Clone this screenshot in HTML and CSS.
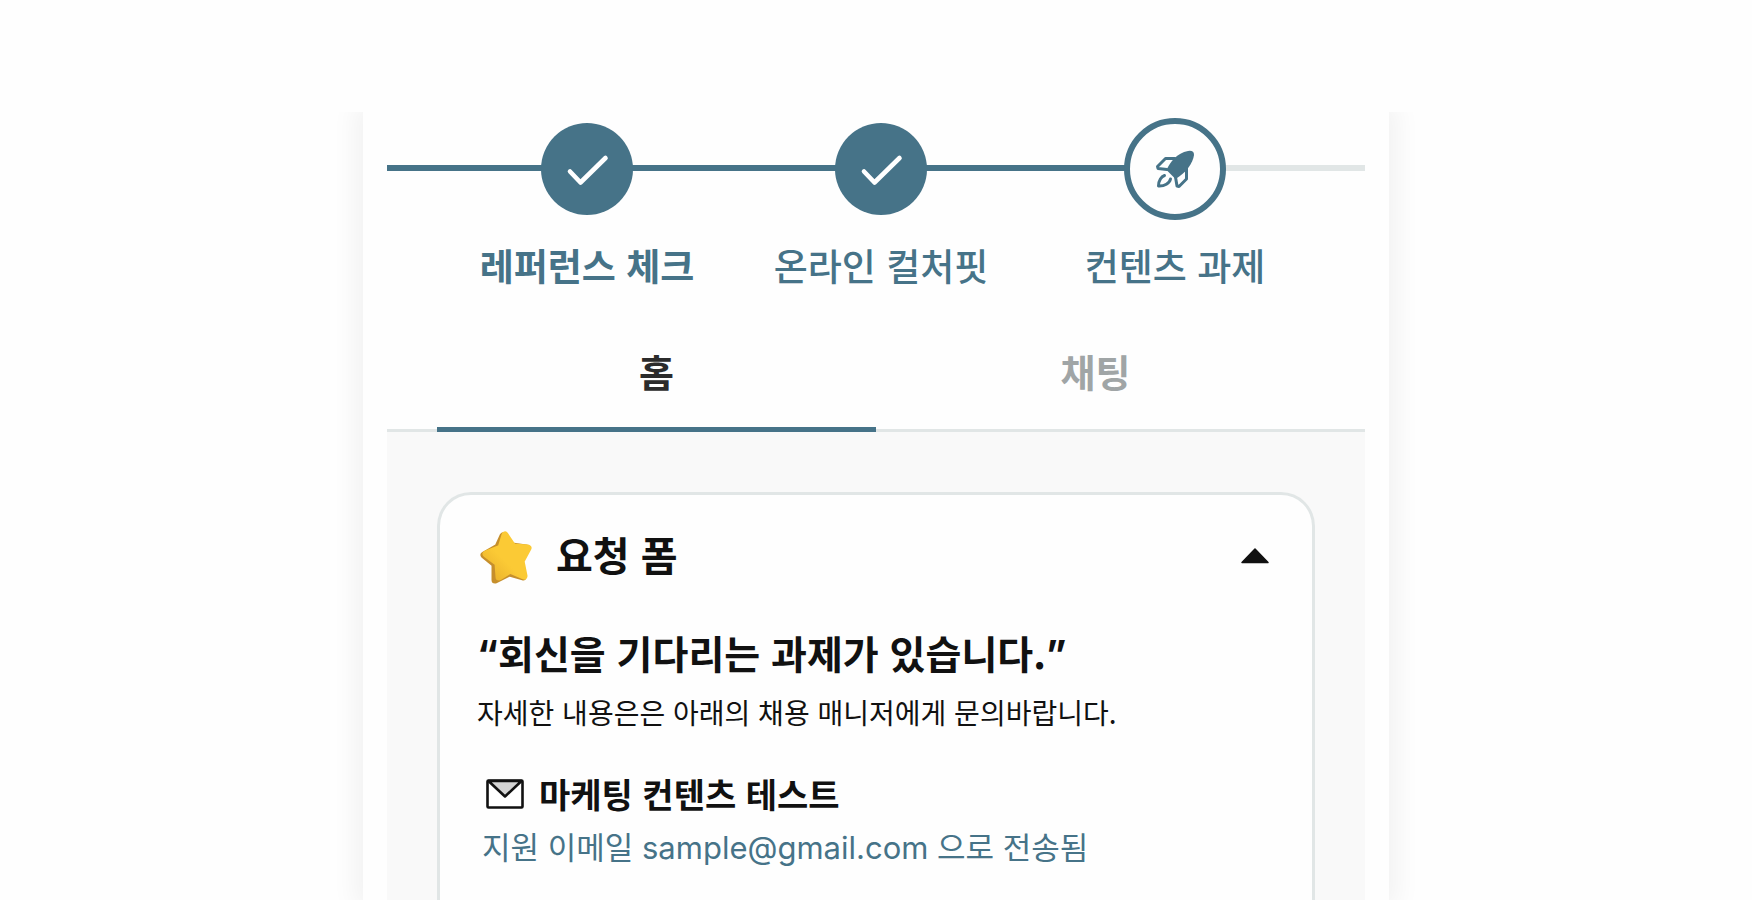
FILE: index.html
```
<!DOCTYPE html>
<html lang="ko">
<head>
    <meta charset="UTF-8">
    <meta name="viewport" content="width=device-width, initial-scale=1.0">
    <title>컨텐츠 과제</title>
    <link rel="stylesheet" href="styles.css">
</head>
<body>

<main class="phone">
    <ol class="steps">
        <li class="step">
            <div class="marker-box">
                <span class="marker">
                    <svg width="44" height="34" viewBox="0 0 44 34" fill="none" stroke="#fff" stroke-width="4.600" stroke-linecap="round" stroke-linejoin="round"><path d="M5 19.500L15.500 30.500L40.500 6"/></svg>
                </span>
            </div>
            <span class="step-label first">레퍼런스 체크</span>
        </li>
        <li class="step">
            <div class="marker-box">
                <span class="marker">
                    <svg width="44" height="34" viewBox="0 0 44 34" fill="none" stroke="#fff" stroke-width="4.600" stroke-linecap="round" stroke-linejoin="round"><path d="M5 19.500L15.500 30.500L40.500 6"/></svg>
                </span>
            </div>
            <span class="step-label">온라인 컬처핏</span>
        </li>
        <li class="step">
            <div class="marker-box">
                <span class="marker current">
                    <svg width="40" height="40" viewBox="0 0 40 40" fill="none" stroke="#467388" stroke-width="3" stroke-linejoin="round" stroke-linecap="round">
                        <path d="M11.500 21C15 13 22 4 33 2q6-1 6 4C38 14 31 24 20.500 30z" fill="#467388" stroke="none"/>
                        <path d="M20 9.500H10.500L2.500 17.500l.5 2L12 20.500"/>
                        <path d="M31.500 19v11L24 37.500l-2-.5L20.500 28"/>
                        <path d="M9.500 26.500c-3 1-6 5-6 10.500 6 .3 11-2.500 12-7"/>
                    </svg>
                </span>
            </div>
            <span class="step-label">컨텐츠 과제</span>
        </li>
    </ol>

    <div class="tabs" role="tablist">
        <button class="tab active" role="tab" aria-selected="true">홈</button>
        <button class="tab" role="tab" aria-selected="false">채팅</button>
    </div>

    <section class="content">
        <div class="card">
            <div class="card-header">
                <svg class="star" width="52" height="54" viewBox="0 0 52 54" stroke-linejoin="round">
                    <defs>
                        <linearGradient id="starFace" x1="0" y1="1" x2="0.7" y2="0.3">
                            <stop offset="0" stop-color="#e9b02c"/>
                            <stop offset="0.6" stop-color="#fbca35"/>
                        </linearGradient>
                    </defs>
                    <path d="M23 6L18 17L4 25L15 34L15 50L29 43L43 47L39 32L46 18L32 16z" fill="#c68f2c" stroke="#c68f2c" stroke-width="7"/>
                    <path d="M25 5L21 18L6 24L18 33L19 47L30 40L44 46L41 31L48 18L33 17z" fill="url(#starFace)" stroke="url(#starFace)" stroke-width="7"/>
                </svg>
                <h2>요청 폼</h2>
                <button class="toggle" aria-label="접기" aria-expanded="true">
                    <svg width="30" height="18" viewBox="0 0 30 18"><path d="M15 2L28 15.500H2z" fill="#111" stroke="#111" stroke-width="1.500" stroke-linejoin="round"/></svg>
                </button>
            </div>
            <div class="card-body">
                <h3><span class="latin">“</span>회신을 기다리는 과제가 있습니다.<span class="latin">”</span></h3>
                <p class="desc">자세한 내용은은 아래의 채용 매니저에게 문의바랍니다.</p>
                <div class="task">
                    <h4>
                        <svg width="38" height="30" viewBox="0 0 38 30" stroke="#111" stroke-width="2.600" stroke-linejoin="round">
                            <rect x="1.500" y="1.500" width="35" height="27" rx="1" fill="#fff"/>
                            <path d="M2.500 2h33L19 17.500z" fill="#d3d3d3"/>
                        </svg>
                        마케팅 컨텐츠 테스트
                    </h4>
                    <p class="sent">지원 이메일 <span class="latin">sample@gmail.com</span> 으로 전송됨</p>
                </div>
            </div>
        </div>
    </section>
</main>

</body>
</html>
```
FILE: styles.css
```
* {
    box-sizing: border-box;
}
body {
    font-family: "Noto Sans CJK KR", "Noto Sans", sans-serif;
    display: flex;
    flex-direction: column;
    min-height: 100vh;
    margin: 0;
    padding-top: 112px;
    background-color: #fefefe;
    color: #111;
}
h2, h3, h4, p, ol {
    margin: 0;
    padding: 0;
}
svg {
    display: block;
    flex-shrink: 0;
}
button {
    font-family: inherit;
    border: none;
    background: none;
    cursor: pointer;
}
.latin {
    font-family: Inter, sans-serif;
}
.phone {
    display: flex;
    flex-direction: column;
    flex: 1;
    width: 100%;
    max-width: 1026px;
    margin: 0 auto;
    padding: 6px 24px 0;
    background-color: #fefefe;
    box-shadow: 0 0 24px 8px rgba(0, 0, 0, 0.05);
    clip-path: inset(0 -40px);
}

/* Progress steps */
.steps {
    display: grid;
    grid-template-columns: repeat(3, 1fr);
    padding: 0 43px 0 53px;
    list-style: none;
    background: linear-gradient(to right, #467388 80%, #e1e6e6 80%) 0 47px / 100% 6px no-repeat;
}
.step {
    text-align: center;
}
.marker-box {
    display: flex;
    align-items: center;
    justify-content: center;
    height: 102px;
}
.marker {
    display: flex;
    align-items: center;
    justify-content: center;
    width: 92px;
    height: 92px;
    border-radius: 50%;
    background-color: #467388;
}
.marker.current {
    width: 102px;
    height: 102px;
    border: 6px solid #467388;
    background-color: #fefefe;
}
.step-label {
    display: block;
    margin-top: 21px;
    font-size: 37px;
    font-weight: 500;
    line-height: 48px;
    color: #467388;
}
.step-label.first {
    font-weight: 700;
}

/* Tabs */
.tabs {
    display: flex;
    margin-top: 27px;
    padding: 0 50px;
    box-shadow: inset 0 -3px #e1e6e6;
}
.tab {
    flex: 1;
    height: 116px;
    padding: 0 0 8px;
    font-size: 38px;
    font-weight: 700;
    color: #a0a5a6;
}
.tab.active {
    color: #2b2b2b;
    box-shadow: inset 0 -5px #467388;
}

/* Request form */
.content {
    display: flex;
    flex: 1;
    padding: 60px 50px 0;
    background-color: #f9f9f9;
}
.card {
    flex: 1;
    border: 3px solid #e1e6e6;
    border-bottom: none;
    border-radius: 34px 34px 0 0;
    background-color: #fefefe;
}
.card-header {
    display: flex;
    align-items: center;
    gap: 24px;
    height: 124px;
    padding: 0 42px 0 40px;
}
.card-header h2 {
    flex: 1;
    padding-bottom: 6px;
    font-size: 40px;
    line-height: 48px;
}
.toggle {
    padding: 0 0 2px;
}
.card-body {
    padding: 9px 37px 8px;
}
.card-body h3 {
    font-size: 39px;
    line-height: 48px;
}
.desc {
    margin-top: 13px;
    font-size: 28px;
    line-height: 40px;
}
.task {
    margin-top: 36px;
    padding-left: 5px;
}
.task h4 {
    display: flex;
    align-items: center;
    gap: 15px;
    padding-left: 4px;
    font-size: 34px;
    line-height: 52px;
}
.sent {
    font-size: 31px;
    line-height: 52px;
    color: #467388;
}

@media (max-width: 768px) {
    .steps, .tabs, .content {
        padding-left: 0;
        padding-right: 0;
    }
    .step-label {
        font-size: 24px;
    }
}
```
